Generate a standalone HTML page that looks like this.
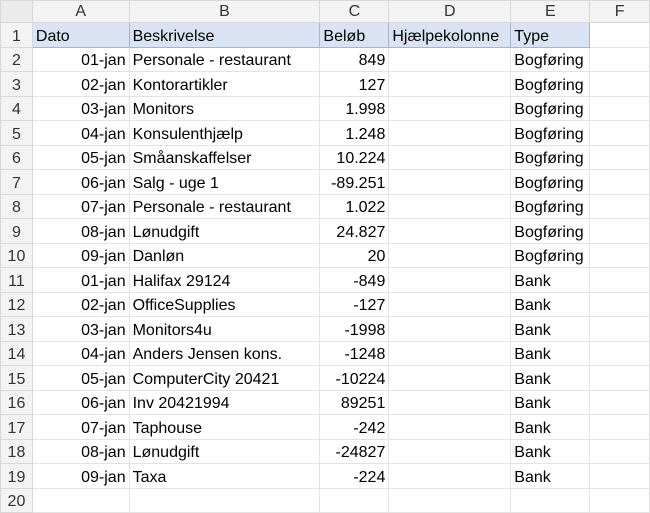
<!DOCTYPE html><html><head><style>
body{margin:0;width:650px;height:511px;overflow:hidden;background:#fff;font-family:"Liberation Sans",sans-serif;font-size:16px;color:#000}
table{border-collapse:collapse;table-layout:fixed;position:absolute;left:0;top:0}
td{border:1px solid #e3e3e3;padding:0 3px 1px;white-space:nowrap;overflow:hidden;height:24.5px;line-height:19px;box-sizing:border-box;vertical-align:bottom}
tr.h td{background:#f3f3f3;text-align:center;height:22px;color:#333;border-color:#d8d8d8;vertical-align:middle;padding:0}
td.n{background:#f3f3f3;text-align:center;color:#333;border-color:#d8d8d8;padding:0 0 1px}
td.r{text-align:right}
tr.one td.b{background:#dae3f3;border-color:#a6b5cf}
</style></head><body>
<table>
<colgroup><col style="width:32px"><col style="width:97px"><col style="width:191px"><col style="width:69px"><col style="width:122px"><col style="width:79px"><col style="width:60px"></colgroup>
<tr class="h"><td style="background:#ebebeb"></td><td>A</td><td>B</td><td>C</td><td>D</td><td>E</td><td>F</td></tr>
<tr class="one"><td class="n">1</td><td class="b">Dato</td><td class="b">Beskrivelse</td><td class="b">Beløb</td><td class="b">Hjælpekolonne</td><td class="b">Type</td><td></td></tr>
<tr><td class="n">2</td><td class="r">01-jan</td><td>Personale - restaurant</td><td class="r">849</td><td></td><td>Bogføring</td><td></td></tr>
<tr><td class="n">3</td><td class="r">02-jan</td><td>Kontorartikler</td><td class="r">127</td><td></td><td>Bogføring</td><td></td></tr>
<tr><td class="n">4</td><td class="r">03-jan</td><td>Monitors</td><td class="r">1.998</td><td></td><td>Bogføring</td><td></td></tr>
<tr><td class="n">5</td><td class="r">04-jan</td><td>Konsulenthjælp</td><td class="r">1.248</td><td></td><td>Bogføring</td><td></td></tr>
<tr><td class="n">6</td><td class="r">05-jan</td><td>Småanskaffelser</td><td class="r">10.224</td><td></td><td>Bogføring</td><td></td></tr>
<tr><td class="n">7</td><td class="r">06-jan</td><td>Salg - uge 1</td><td class="r">-89.251</td><td></td><td>Bogføring</td><td></td></tr>
<tr><td class="n">8</td><td class="r">07-jan</td><td>Personale - restaurant</td><td class="r">1.022</td><td></td><td>Bogføring</td><td></td></tr>
<tr><td class="n">9</td><td class="r">08-jan</td><td>Lønudgift</td><td class="r">24.827</td><td></td><td>Bogføring</td><td></td></tr>
<tr><td class="n">10</td><td class="r">09-jan</td><td>Danløn</td><td class="r">20</td><td></td><td>Bogføring</td><td></td></tr>
<tr><td class="n">11</td><td class="r">01-jan</td><td>Halifax 29124</td><td class="r">-849</td><td></td><td>Bank</td><td></td></tr>
<tr><td class="n">12</td><td class="r">02-jan</td><td>OfficeSupplies</td><td class="r">-127</td><td></td><td>Bank</td><td></td></tr>
<tr><td class="n">13</td><td class="r">03-jan</td><td>Monitors4u</td><td class="r">-1998</td><td></td><td>Bank</td><td></td></tr>
<tr><td class="n">14</td><td class="r">04-jan</td><td>Anders Jensen kons.</td><td class="r">-1248</td><td></td><td>Bank</td><td></td></tr>
<tr><td class="n">15</td><td class="r">05-jan</td><td>ComputerCity 20421</td><td class="r">-10224</td><td></td><td>Bank</td><td></td></tr>
<tr><td class="n">16</td><td class="r">06-jan</td><td>Inv 20421994</td><td class="r">89251</td><td></td><td>Bank</td><td></td></tr>
<tr><td class="n">17</td><td class="r">07-jan</td><td>Taphouse</td><td class="r">-242</td><td></td><td>Bank</td><td></td></tr>
<tr><td class="n">18</td><td class="r">08-jan</td><td>Lønudgift</td><td class="r">-24827</td><td></td><td>Bank</td><td></td></tr>
<tr><td class="n">19</td><td class="r">09-jan</td><td>Taxa</td><td class="r">-224</td><td></td><td>Bank</td><td></td></tr>
<tr><td class="n">20</td><td></td><td></td><td></td><td></td><td></td><td></td></tr>
</table>
</body></html>
